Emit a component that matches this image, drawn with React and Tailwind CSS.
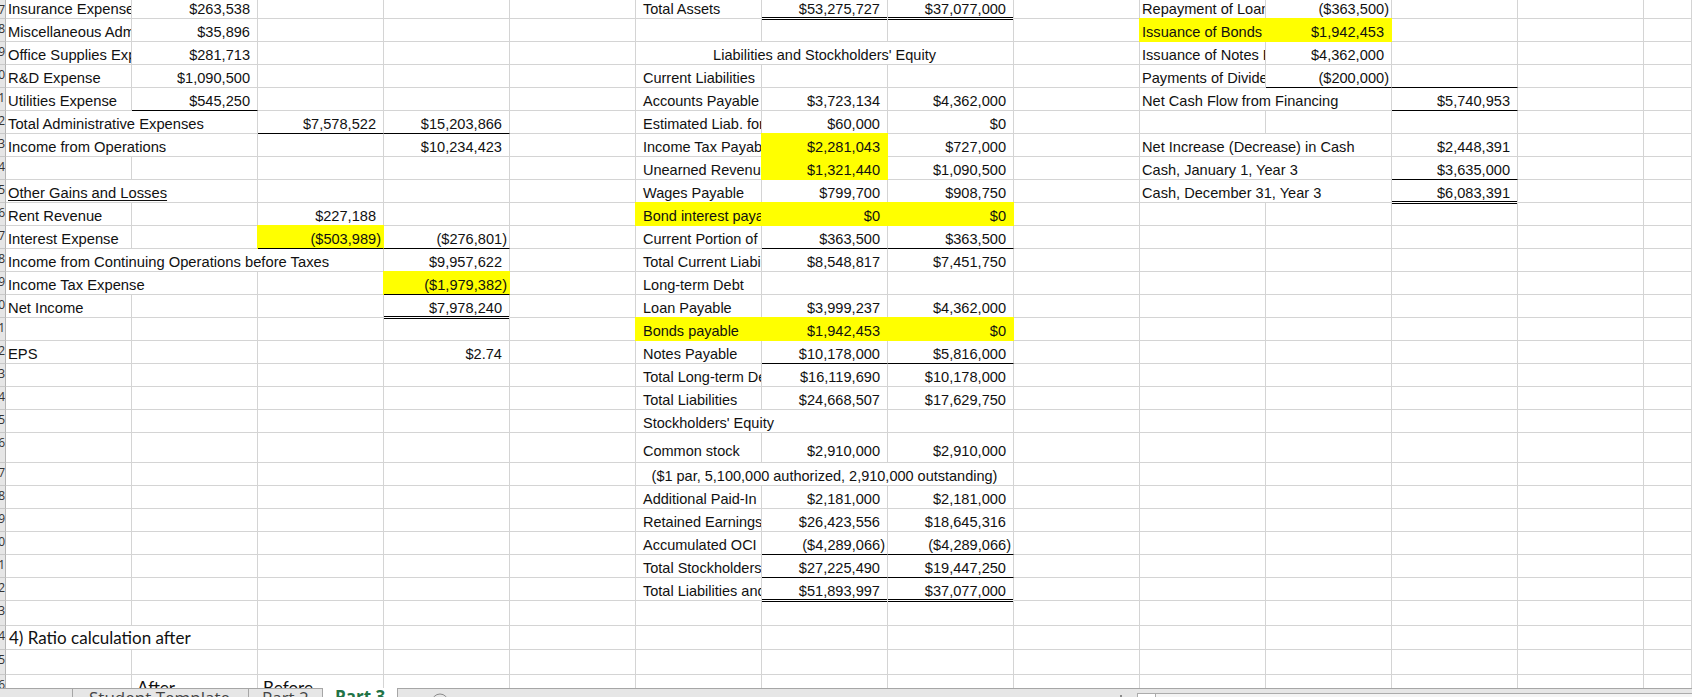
import React from "react";

const spanClass = { 1: "col-span-1", 2: "col-span-2", 3: "col-span-3" };

// row height, then the filled cells keyed by column number (1-14)
const rows = [
  { h: "h-[19px]", c: { 1: { t: "Insurance Expense" }, 2: { t: "$263,538" }, 6: { t: "Total Assets" }, 7: { t: "$53,275,727", b: 2 }, 8: { t: "$37,077,000", b: 2 }, 10: { t: "Repayment of Loan Payable" }, 11: { t: "($363,500)" } } },
  { c: { 1: { t: "Miscellaneous Administrative" }, 2: { t: "$35,896" }, 10: { t: "Issuance of Bonds", y: 1 }, 11: { t: "$1,942,453", y: 1 } } },
  { c: { 1: { t: "Office Supplies Expense" }, 2: { t: "$281,713" }, 6: { t: "Liabilities and Stockholders' Equity", s: 3, center: 1 }, 10: { t: "Issuance of Notes Payable" }, 11: { t: "$4,362,000" } } },
  { c: { 1: { t: "R&D Expense" }, 2: { t: "$1,090,500" }, 6: { t: "Current Liabilities" }, 10: { t: "Payments of Dividends" }, 11: { t: "($200,000)", b: 1 }, 12: { b: 1 } } },
  { c: { 1: { t: "Utilities Expense" }, 2: { t: "$545,250", b: 1 }, 6: { t: "Accounts Payable" }, 7: { t: "$3,723,134" }, 8: { t: "$4,362,000" }, 10: { t: "Net Cash Flow from Financing", s: 2 }, 12: { t: "$5,740,953", b: 1 } } },
  { c: { 1: { t: "Total Administrative Expenses", s: 2 }, 3: { t: "$7,578,522", b: 1 }, 4: { t: "$15,203,866", b: 1 }, 6: { t: "Estimated Liab. for Warranty" }, 7: { t: "$60,000" }, 8: { t: "$0" } } },
  { c: { 1: { t: "Income from Operations", s: 2 }, 4: { t: "$10,234,423" }, 6: { t: "Income Tax Payable" }, 7: { t: "$2,281,043", y: 1 }, 8: { t: "$727,000" }, 10: { t: "Net Increase (Decrease) in Cash", s: 2 }, 12: { t: "$2,448,391" } } },
  { c: { 6: { t: "Unearned Revenue" }, 7: { t: "$1,321,440", y: 1 }, 8: { t: "$1,090,500" }, 10: { t: "Cash, January 1, Year 3", s: 2 }, 12: { t: "$3,635,000", b: 1 } } },
  { c: { 1: { t: "Other Gains and Losses", s: 2, u: 1 }, 6: { t: "Wages Payable" }, 7: { t: "$799,700" }, 8: { t: "$908,750" }, 10: { t: "Cash, December 31, Year 3", s: 2 }, 12: { t: "$6,083,391", b: 2 } } },
  { c: { 1: { t: "Rent Revenue" }, 3: { t: "$227,188" }, 6: { t: "Bond interest payable", y: 1 }, 7: { t: "$0", y: 1 }, 8: { t: "$0", y: 1 } } },
  { c: { 1: { t: "Interest Expense" }, 3: { t: "($503,989)", y: 1, b: 1 }, 4: { t: "($276,801)", b: 1 }, 6: { t: "Current Portion of Long-term Debt" }, 7: { t: "$363,500", b: 1 }, 8: { t: "$363,500", b: 1 } } },
  { c: { 1: { t: "Income from Continuing Operations before Taxes", s: 3 }, 4: { t: "$9,957,622" }, 6: { t: "Total Current Liabilities" }, 7: { t: "$8,548,817" }, 8: { t: "$7,451,750" } } },
  { c: { 1: { t: "Income Tax Expense", s: 2 }, 4: { t: "($1,979,382)", y: 1, b: 1 }, 6: { t: "Long-term Debt" } } },
  { c: { 1: { t: "Net Income" }, 4: { t: "$7,978,240", b: 2 }, 6: { t: "Loan Payable" }, 7: { t: "$3,999,237" }, 8: { t: "$4,362,000" } } },
  { c: { 6: { t: "Bonds payable", y: 1 }, 7: { t: "$1,942,453", y: 1 }, 8: { t: "$0", y: 1 } } },
  { c: { 1: { t: "EPS" }, 4: { t: "$2.74" }, 6: { t: "Notes Payable" }, 7: { t: "$10,178,000", b: 1 }, 8: { t: "$5,816,000", b: 1 } } },
  { c: { 6: { t: "Total Long-term Debt" }, 7: { t: "$16,119,690" }, 8: { t: "$10,178,000" } } },
  { c: { 6: { t: "Total Liabilities" }, 7: { t: "$24,668,507" }, 8: { t: "$17,629,750" } } },
  { c: { 6: { t: "Stockholders' Equity", s: 2 } } },
  { h: "h-[30px]", lift: 1, c: { 6: { t: "Common stock" }, 7: { t: "$2,910,000" }, 8: { t: "$2,910,000" } } },
  { c: { 6: { t: "($1 par, 5,100,000 authorized, 2,910,000 outstanding)", s: 3, center: 1 } } },
  { c: { 6: { t: "Additional Paid-In Capital" }, 7: { t: "$2,181,000" }, 8: { t: "$2,181,000" } } },
  { c: { 6: { t: "Retained Earnings" }, 7: { t: "$26,423,556" }, 8: { t: "$18,645,316" } } },
  { c: { 6: { t: "Accumulated OCI" }, 7: { t: "($4,289,066)", b: 1 }, 8: { t: "($4,289,066)", b: 1 } } },
  { c: { 6: { t: "Total Stockholders' Equity" }, 7: { t: "$27,225,490", b: 1 }, 8: { t: "$19,447,250", b: 1 } } },
  { c: { 6: { t: "Total Liabilities and Stockholders' Equity" }, 7: { t: "$51,893,997", b: 2 }, 8: { t: "$37,077,000", b: 2 } } },
  { h: "h-[25px]", c: {} },
  { h: "h-[24px]", c: { 1: { t: "4) Ratio calculation after", s: 2, cal: 1 } } },
  { h: "h-[25px]", c: {} },
  { h: "h-[24px]", c: { 2: { t: "After", cal: 1, tab: 1 }, 3: { t: "Before", cal: 1, tab: 1 } } },
];

const isValue = (t) => t && (t.startsWith("$") || t.startsWith("("));

const Cell = ({ cell, col, lift }) => {
  const { t, s = 1, y, b, u, center, cal, tab } = cell;
  const value = isValue(t) && !center;
  const negative = value && t.startsWith("(");

  let line = "border-b-[#d4d4d4]";
  if (y) line = "border-b-transparent";
  if (b === 1) line = "border-b-black";
  if (b === 2) line = "border-b-white shadow-[inset_0_-1px_0_#000,0_1px_0_#000]";

  // label widths differ a little per block in the reference
  let size = "text-[14.6px]";
  if (!value && col === 1) size = "text-[14.75px]";
  if (!value && col === 6) size = "text-[14.5px]";

  return (
    <div
      className={`${spanClass[s]} flex min-w-0 overflow-hidden whitespace-nowrap border-b border-r ${line} ${
        y
          ? "relative bg-[#ffff00] border-r-transparent shadow-[-1px_-1px_0_#ffff00,0_-1px_0_#ffff00,-1px_0_0_#ffff00]"
          : "border-r-[#d4d4d4]"
      } ${center ? "justify-center" : value ? "justify-end" : "justify-start"} ${
        negative ? "pr-[2px]" : value ? "pr-[7px]" : ""
      } ${!value && !center ? (col === 6 ? "pl-[7px]" : cal ? "pl-[3px]" : "pl-[2px]") : ""} ${
        cal
          ? "font-['Lato',sans-serif] text-[17px] items-center"
          : `font-['Liberation_Sans',Arial,sans-serif] ${size} items-end`
      } ${tab ? "!pl-[5px] !items-start pt-[4px]" : ""} ${lift ? "pb-[2px]" : ""}`}
    >
      <span className={`leading-[17px] ${u ? "underline underline-offset-2" : ""}`}>{t}</span>
    </div>
  );
};

const Row = ({ row, index }) => {
  const cells = [];
  let col = 1;
  while (col <= 14) {
    const cell = row.c[col] || {};
    cells.push(<Cell key={col} cell={cell} col={col} lift={row.lift} />);
    col += cell.s || 1;
  }
  return (
    <div className={`grid grid-cols-[6px_repeat(13,126px)_1fr] text-[#111] ${row.h || "h-[23px]"}`}>
      <div className="flex justify-end overflow-hidden border-b border-r border-b-[#c8c8c8] border-r-[#b4b4b4] bg-[#e6e6e6] font-['Open_Sans',sans-serif] text-[12px] leading-[19px] text-[#333]">
        <span className="shrink-0">{67 + index}</span>
      </div>
      {cells}
    </div>
  );
};

export default function App() {
  return (
    <div className="flex h-[697px] w-[1692px] flex-col overflow-hidden bg-white">
      <div className="h-[688px] shrink-0 overflow-hidden">
        {rows.map((row, i) => (
          <Row key={i} row={row} index={i} />
        ))}
      </div>

      {/* sheet tabs, cut off by the bottom of the window */}
      <div className="flex h-[9px] shrink-0 overflow-hidden bg-[#e6e6e6] font-['Open_Sans',sans-serif] text-[17px] leading-[18px] text-[#444]">
        <div className="flex w-[323px] shrink-0 border-r border-t border-[#a6a6a6]">
          <div className="w-[73px] border-r border-[#a6a6a6]" />
          <div className="w-[176px] border-r border-[#a6a6a6] pl-[16px] whitespace-nowrap">Student Template</div>
          <div className="pl-[13px] whitespace-nowrap">Part 2</div>
        </div>
        <div className="w-[74px] shrink-0 bg-white pl-[12px] font-bold text-[#217346]">Part 3</div>
        <div className="flex w-[740px] shrink-0 border-l border-t border-[#a6a6a6]">
          <svg className="ml-[33px] mt-[4px] shrink-0" width="18" height="18" viewBox="0 0 18 18" fill="none" stroke="#8a8a8a">
            <circle cx="9" cy="9" r="8" />
            <path d="M9 5v8M5 9h8" />
          </svg>
          <div className="ml-[671px] mt-[6px] h-[2px] w-[2px] shrink-0 bg-[#8a8a8a]" />
        </div>
        <div className="flex flex-1 border-t border-[#a6a6a6]">
          <div className="mt-[4px] flex flex-1 border-l border-t border-[#ababab] bg-[#f4f4f4]">
            <div className="w-[18px] border-r border-[#ababab] bg-white" />
          </div>
        </div>
      </div>
    </div>
  );
}
